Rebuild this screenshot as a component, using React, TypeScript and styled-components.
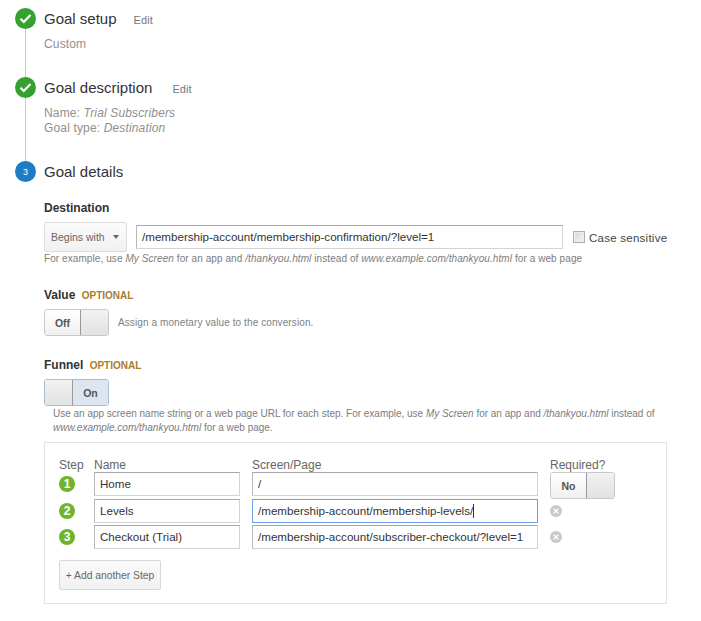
import React from "react";
import styled, { createGlobalStyle } from "styled-components";

const Global = createGlobalStyle`
  html, body { margin: 0; padding: 0; background: #fff; }
  body { font-family: "Liberation Sans", Arial, sans-serif; color: #333; }
`;
const Page = styled.div`width: 701px; height: 621px; overflow: hidden; box-sizing: border-box; padding: 8px 0 0 15px;`;
const Step = styled.section<{ $h?: number }>`display: flex; gap: 8px; ${p => p.$h ? `height: ${p.$h}px;` : ""}`;
const Rail = styled.div`width: 21px; display: flex; flex-direction: column; align-items: center; flex: none;`;
const Connector = styled.div`width: 1px; flex: 1; background: #cbcbcb; margin-right: 1px;`;
const Circle = styled.div<{ $blue?: boolean }>`
  width: 21px; height: 21px; border-radius: 50%; flex: none;
  background: ${p => p.$blue ? "#1f7bc4" : "#36a030"};
  color: #fff; font-size: 9px; display: flex; align-items: center; justify-content: center;
`;
const Content = styled.div`flex: 1; min-width: 0;`;
const TitleRow = styled.div`display: flex; align-items: baseline; height: 22px; line-height: 22px;`;
const Title = styled.h2`margin: 0; font-size: 15px; font-weight: 400; color: #333;`;
const EditLink = styled.span<{ $gap: number }>`font-size: 11px; color: #777; letter-spacing: 0.1px; margin-left: ${p => p.$gap}px;`;
const Summary = styled.div`margin-top: 7px; font-size: 12px; letter-spacing: 0.15px; line-height: 15px; color: #8f8f8f;`;
const SectionLabel = styled.div<{ $top: number }>`
  margin-top: ${p => p.$top}px; font-size: 12px; font-weight: 700; color: #333; line-height: 14px;
`;
const Optional = styled.span`font-size: 10px; color: #a87b2d; margin-left: 3px; font-weight: 700;`;
const DestRow = styled.div`display: flex; align-items: center; margin-top: 7px; height: 30px;`;
const Select = styled.div`
  box-sizing: border-box; width: 83px; height: 30px; border: 1px solid #ddd; border-radius: 2px;
  background: linear-gradient(#fbfbfb, #f1f1f1); display: flex; align-items: center; justify-content: space-between;
  padding: 0 7px 0 6px; font-size: 10.5px; color: #666; flex: none;
`;
const Caret = styled.span`width: 0; height: 0; border-left: 3.5px solid transparent; border-right: 3.5px solid transparent; border-top: 4px solid #666;`;
const TextField = styled.div<{ $w: number; $focus?: boolean }>`
  box-sizing: border-box; width: ${p => p.$w}px; height: 24px; padding: 0 5px; flex: none;
  border: 1px solid ${p => p.$focus ? "#6f9ee8" : "#d4d4d4"};
  border-top-color: ${p => p.$focus ? "#6f9ee8" : "#a8a8a8"};
  border-left-color: ${p => p.$focus ? "#6f9ee8" : "#b8b8b8"};
  background: #fff; font-size: 11.6px; line-height: 22px; color: #333; white-space: nowrap; overflow: hidden;
`;
const DestInput = styled(TextField)`margin-left: 9px;`;
const TextCursor = styled.span`display: inline-block; width: 1px; height: 14px; background: #333; vertical-align: -3px;`;
const Check = styled.span`
  width: 12px; height: 12px; box-sizing: border-box; margin-left: 10px; border: 1px solid #b0b0b0; flex: none;
  background: linear-gradient(135deg, #d8d8d8, #f4f4f4); box-shadow: inset 0 0 0 1px #eee;
`;
const CheckLabel = styled.span`margin-left: 4px; font-size: 11.5px; letter-spacing: 0.25px; color: #444; white-space: nowrap; line-height: 14px; padding-top: 2px;`;
const Help = styled.div<{ $left?: number; $spacing?: number }>`
  font-size: 10px; line-height: 14px; color: #7c7c7c; margin-left: ${p => p.$left ?? 0}px; letter-spacing: ${p => p.$spacing ?? 0}px;
`;
const ToggleRow = styled.div`display: flex; align-items: center; margin-top: 6px;`;
const ToggleShell = styled.div<{ $on?: boolean }>`
  box-sizing: border-box; width: 65px; height: 27px; border: 1px solid #c8c8c8; border-radius: 3px; flex: none;
  display: flex; overflow: hidden; flex-direction: ${p => p.$on ? "row-reverse" : "row"};
  ${p => p.$on ? "border-color: #a9bdd8;" : ""}
`;
const ToggleText = styled.div<{ $on?: boolean }>`
  flex: 1; display: flex; align-items: center; justify-content: center;
  font-size: 10.5px; font-weight: 700; color: #555;
  background: ${p => p.$on ? "#dde5f1" : "linear-gradient(#fff, #f0f0f0)"};
`;
const ToggleKnob = styled.div<{ $on?: boolean }>`
  width: 27px; flex: none; background: linear-gradient(#f2f2f2, #e2e2e2);
  ${p => p.$on ? "border-right: 1px solid #999;" : "border-left: 1px solid #999;"}
`;
const ToggleHint = styled.span`margin-left: 9px; font-size: 10px; letter-spacing: 0.1px; color: #808080;`;
const FunnelHelp = styled(Help)`margin-top: 1px;`;
const Box = styled.div`
  box-sizing: border-box; width: 623px; height: 162px; margin-top: 7px; border: 1px solid #e3e3e3;
  padding: 15px 14px 0;
  display: grid; grid-template-columns: 35px 146px 12px 286px 12px 65px;
  grid-template-rows: 14px 27px 26px 26px auto; align-content: start;
  font-size: 12px; color: #444;
`;
const Head = styled.div<{ $col: number }>`grid-column: ${p => p.$col}; line-height: 14px; font-size: 12px; color: #666;`;
const RowCell = styled.div<{ $col: number }>`grid-column: ${p => p.$col}; display: flex; align-items: flex-start;`;
const Num = styled.div`
  width: 16px; height: 16px; margin-top: 4px; border-radius: 50%; background: #6fb52c; color: #fff;
  font-size: 12px; font-weight: 700; display: flex; align-items: center; justify-content: center;
`;
const RemoveIcon = styled.svg`margin: 6px 0 0 0; display: block;`;
const AddButton = styled.button`
  grid-column: 1 / span 4; justify-self: start; box-sizing: border-box; width: 102px; height: 30px; margin-top: 9px;
  border: 1px solid #d8d8d8; border-radius: 2px; background: linear-gradient(#fbfbfb, #f1f1f1);
  font: 400 10.3px "Liberation Sans", Arial, sans-serif; color: #666; padding: 0;
`;

const CheckMark = () => (
  <svg width="13" height="11" viewBox="0 0 13 11" aria-hidden>
    <path d="M1.5 5.8 L4.8 9 L11.5 2" fill="none" stroke="#fff" strokeWidth="2.2" />
  </svg>
);
const Remove = () => (
  <RemoveIcon width="12" height="12" viewBox="0 0 12 12" aria-hidden>
    <circle cx="6" cy="6" r="6" fill="#c9c9c9" />
    <path d="M3.7 3.7 L8.3 8.3 M8.3 3.7 L3.7 8.3" stroke="#fff" strokeWidth="1.3" />
  </RemoveIcon>
);
const Toggle = ({ on, label }: { on?: boolean; label: string }) => (
  <ToggleShell $on={on}>
    <ToggleText $on={on}>{label}</ToggleText>
    <ToggleKnob $on={on} />
  </ToggleShell>
);

const rows = [
  { n: 1, name: "Home", page: "/" },
  { n: 2, name: "Levels", page: "/membership-account/membership-levels/", focus: true },
  { n: 3, name: "Checkout (Trial)", page: "/membership-account/subscriber-checkout/?level=1" },
];

export default function App() {
  return (
    <Page>
      <Global />
      <Step $h={69}>
        <Rail><Circle><CheckMark /></Circle><Connector /></Rail>
        <Content>
          <TitleRow><Title>Goal setup</Title><EditLink $gap={17}>Edit</EditLink></TitleRow>
          <Summary>Custom</Summary>
        </Content>
      </Step>
      <Step $h={84}>
        <Rail><Circle><CheckMark /></Circle><Connector /></Rail>
        <Content>
          <TitleRow><Title>Goal description</Title><EditLink $gap={20}>Edit</EditLink></TitleRow>
          <Summary>Name: <em>Trial Subscribers</em><br />Goal type: <em>Destination</em></Summary>
        </Content>
      </Step>
      <Step>
        <Rail><Circle $blue>3</Circle></Rail>
        <Content>
          <TitleRow><Title>Goal details</Title></TitleRow>
          <SectionLabel $top={18}>Destination</SectionLabel>
          <DestRow>
            <Select>Begins with <Caret /></Select>
            <DestInput $w={427}>/membership-account/membership-confirmation/?level=1</DestInput>
            <Check />
            <CheckLabel>Case sensitive</CheckLabel>
          </DestRow>
          <Help $spacing={0.08}>For example, use <em>My Screen</em> for an app and <em>/thankyou.html</em> instead of <em>www.example.com/thankyou.html</em> for a web page</Help>
          <SectionLabel $top={22}>Value <Optional>OPTIONAL</Optional></SectionLabel>
          <ToggleRow>
            <Toggle label="Off" />
            <ToggleHint>Assign a monetary value to the conversion.</ToggleHint>
          </ToggleRow>
          <SectionLabel $top={22}>Funnel <Optional>OPTIONAL</Optional></SectionLabel>
          <ToggleRow><Toggle on label="On" /></ToggleRow>
          <FunnelHelp $left={9} $spacing={-0.01}>Use an app screen name string or a web page URL for each step. For example, use <em>My Screen</em> for an app and <em>/thankyou.html</em> instead of<br /><em>www.example.com/thankyou.html</em> for a web page.</FunnelHelp>
          <Box>
            <Head $col={1}>Step</Head>
            <Head $col={2}>Name</Head>
            <Head $col={4}>Screen/Page</Head>
            <Head $col={6}>Required?</Head>
            {rows.map(r => (
              <React.Fragment key={r.n}>
                <RowCell $col={1}><Num>{r.n}</Num></RowCell>
                <RowCell $col={2}><TextField $w={146}>{r.name}</TextField></RowCell>
                <RowCell $col={4}><TextField $w={286} $focus={r.focus}>{r.page}{r.focus && <TextCursor />}</TextField></RowCell>
                <RowCell $col={6}>{r.n === 1 ? <Toggle label="No" /> : <Remove />}</RowCell>
              </React.Fragment>
            ))}
            <AddButton>+ Add another Step</AddButton>
          </Box>
        </Content>
      </Step>
    </Page>
  );
}
